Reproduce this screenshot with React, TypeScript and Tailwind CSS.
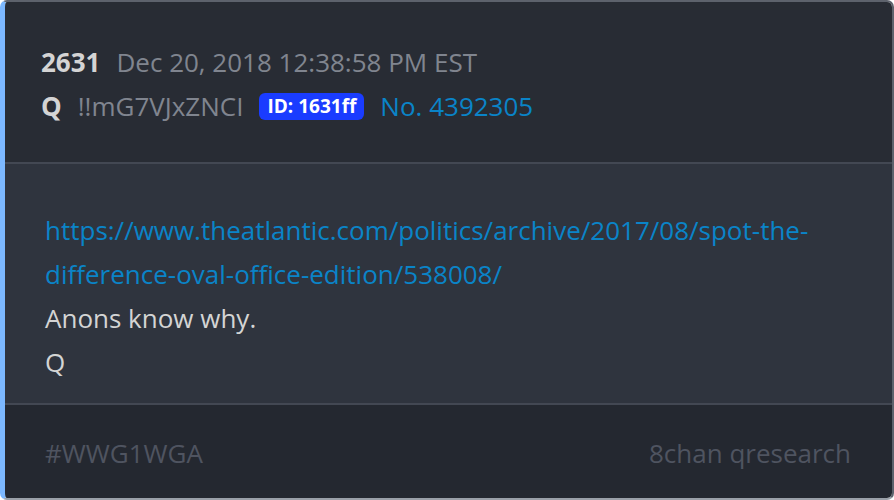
export default function App() {
  return (
    <div className="w-[894px] h-[500px] bg-white" style={{ fontFamily: '"Open Sans", sans-serif' }}>
      <div className="w-full h-full flex flex-col rounded-[7px] overflow-hidden border-2 border-[#5d626c] border-l-[5px] border-l-[#7cb8ff] border-b-[#9aa0a8]">
        <div className="bg-[#282c34] pt-[38px] pb-[34px] pl-[36px] text-[26px] leading-[44px]">
          <div className="flex items-center">
            <span className="font-bold text-[#d4d4d4]">2631</span>
            <span className="ml-[16px] text-[#80858f]">Dec 20, 2018 12:38:58 PM EST</span>
          </div>
          <div className="flex items-center">
            <span className="font-bold text-[#d4d4d4]">Q</span>
            <span className="ml-[16px] text-[#80858f]">!!mG7VJxZNCI</span>
            <span className="ml-[16px] bg-[#1a3cff] text-white font-bold text-[19px] leading-[27px] px-[8px] rounded-[6px]">ID: 1631ff</span>
            <span className="ml-[16px] text-[#0a84c8]">No. 4392305</span>
          </div>
        </div>
        <div className="h-[2px] bg-[#434853]" />
        <div className="bg-[#2f343e] pt-[44px] pb-[19px] pl-[40px] pr-[40px] text-[26px] leading-[44px]">
          <div className="text-[#0a84c8]">https://www.theatlantic.com/politics/archive/2017/08/spot-the-difference-oval-office-edition/538008/</div>
          <div className="text-[#d4d4d4]">Anons know why.</div>
          <div className="text-[#d4d4d4]">Q</div>
        </div>
        <div className="h-[2px] bg-[#434853]" />
        <div className="flex-1 bg-[#242830] flex items-center justify-between pl-[40px] pr-[41px] pt-[4px] text-[26px] text-[#4f5460]">
          <span>#WWG1WGA</span>
          <span>8chan qresearch</span>
        </div>
      </div>
    </div>
  );
}
